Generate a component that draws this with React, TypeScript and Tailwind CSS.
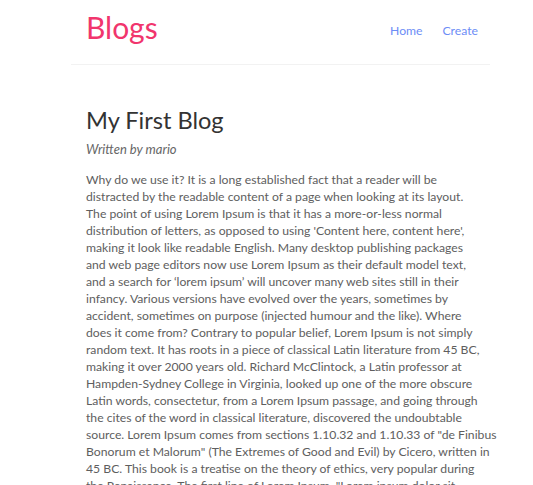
const lines = [
  "Why do we use it? It is a long established fact that a reader will be",
  "distracted by the readable content of a page when looking at its layout.",
  "The point of using Lorem Ipsum is that it has a more-or-less normal",
  "distribution of letters, as opposed to using 'Content here, content here',",
  "making it look like readable English. Many desktop publishing packages",
  "and web page editors now use Lorem Ipsum as their default model text,",
  "and a search for \u2018lorem ipsum\u2019 will uncover many web sites still in their",
  "infancy. Various versions have evolved over the years, sometimes by",
  "accident, sometimes on purpose (injected humour and the like). Where",
  "does it come from? Contrary to popular belief, Lorem Ipsum is not simply",
  "random text. It has roots in a piece of classical Latin literature from 45 BC,",
  "making it over 2000 years old. Richard McClintock, a Latin professor at",
  "Hampden-Sydney College in Virginia, looked up one of the more obscure",
  "Latin words, consectetur, from a Lorem Ipsum passage, and going through",
  "the cites of the word in classical literature, discovered the undoubtable",
  "source. Lorem Ipsum comes from sections 1.10.32 and 1.10.33 of \"de Finibus",
  "Bonorum et Malorum\" (The Extremes of Good and Evil) by Cicero, written in",
  "45 BC. This book is a treatise on the theory of ethics, very popular during",
  "the Renaissance. The first line of Lorem Ipsum, \"Lorem ipsum dolor sit",
];

export default function App() {
  return (
    <div className="h-[485px] overflow-hidden bg-white font-['Lato','Noto_Sans',sans-serif]">
      {/* Navbar */}
      <nav className="ml-[71px] w-[419px] h-[65px] pl-[15px] pr-[12px] flex items-center border-b border-[#f2f2f2]">
        <h1 className="text-[30px] leading-none text-[#f1356d] -mt-[11px]">Blogs</h1>
        <div className="ml-auto flex gap-[20px] text-[12.2px] text-[#6d8df6] -mt-[2px]">
          <a href="#">Home</a>
          <a href="#">Create</a>
        </div>
      </nav>

      {/* Blog details */}
      <div className="ml-[86px] w-[420px] pt-[41px]">
        <h2 className="text-[23.6px] leading-[28px] text-[#333]">My First Blog</h2>
        <p className="mt-[7px] text-[13px] leading-[16px] italic text-[#666]">Written by mario</p>
        <div className="mt-[14px] text-[12.2px] leading-[17px] text-[#5e5e5e]">
          {lines.map((l, i) => (
            <div key={i} className="whitespace-nowrap">
              {l}
            </div>
          ))}
        </div>
      </div>
    </div>
  );
}
